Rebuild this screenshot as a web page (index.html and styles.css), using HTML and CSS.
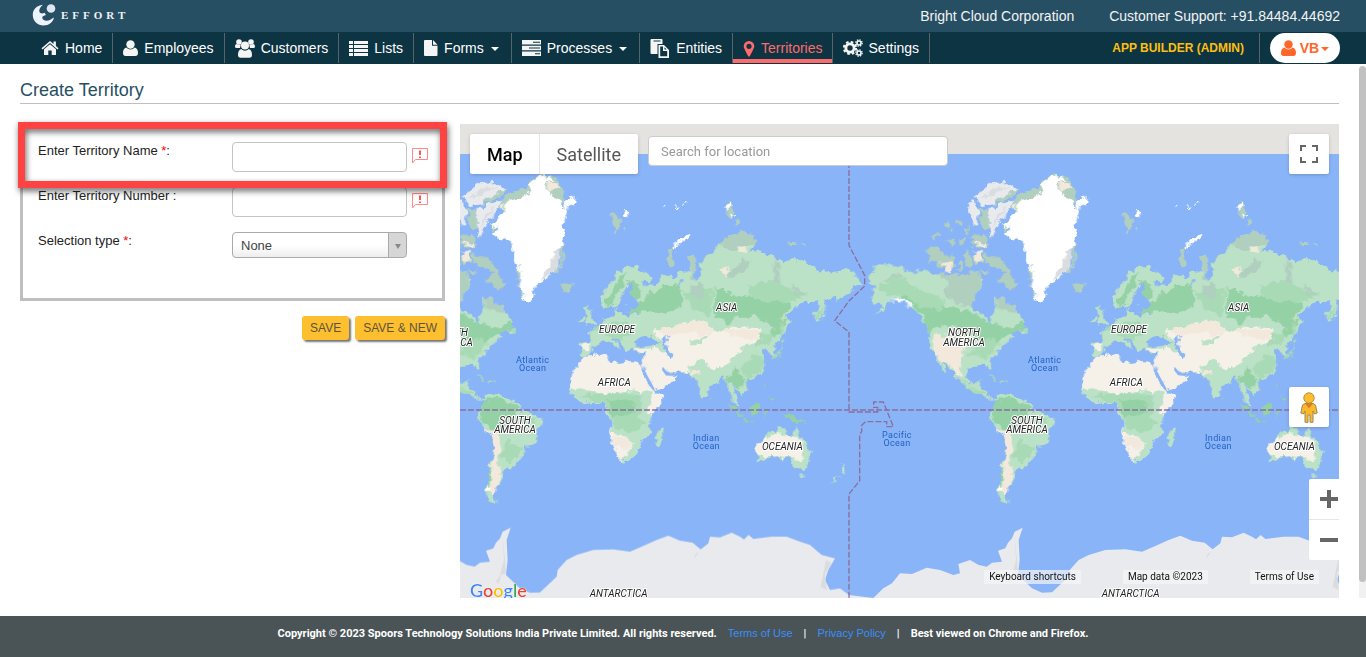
FILE: index.html
```html
<!DOCTYPE html>
<html lang="en">
<head>
<meta charset="utf-8">
<title>Create Territory</title>
<link rel="stylesheet" href="styles.css">
</head>
<body>
<header>
  <div class="topbar">
    <a class="brand" href="#" aria-label="Effort">
      <svg width="24" height="22" viewBox="0 0 24 22"><circle cx="19" cy="4.500" r="4.300" fill="#dde6f2"/><path d="M11 .8C4 1.500.8 6 .8 11c0 6 4.700 10.500 10.700 10.500 5.500 0 9.500-3.500 10.500-8-2.500 1.500-5 3.500-8 3.300-2.500-.3-4-1.800-3.700-3.500.3-1 1.500-1.700 3.700-2.300l-1.500-2.200C10.500 9.700 8.500 9.800 7.500 8 6.700 6 8 3 11 .8Z" fill="#edf3fc"/></svg>
      <span>EFFORT</span>
    </a>
    <span class="company">Bright Cloud Corporation</span>
    <span>Customer Support: +91.84484.44692</span>
  </div>
  <nav class="nav">
    <a href="#"><svg width="18" height="16" viewBox="0 0 17 16"><path d="M8.500 1 0 8.200l1 1.200 7.500-6.300L16 9.400l1-1.200-2.600-2.200V1.500H12v2.500Z"/><path d="m8.500 4.200-6 5V15h4.300v-4.500h3.400V15h4.300V9.200Z"/></svg>Home</a>
    <a href="#"><svg width="15" height="16" viewBox="0 0 15 16"><circle cx="7.500" cy="4.500" r="4.200"/><path d="M3.300 7.600C1 8.300 0 10.500 0 13c0 2 1 3 2.500 3h10c1.500 0 2.500-1 2.500-3 0-2.500-1-4.700-3.300-5.400-2.300 2.500-6.100 2.500-8.400 0Z"/></svg>Employees</a>
    <a href="#"><svg width="20" height="19" viewBox="0 0 20 19"><circle cx="4" cy="3" r="2.800"/><circle cx="16" cy="3" r="2.800"/><path d="M0 7.500C0 6 .7 5.200 1.800 5c1.400 1 3 1 4 .4L5 9H1.500Q0 9 0 7.500ZM20 7.500C20 6 19.300 5.200 18.200 5c-1.400 1-3 1-4 .4L15 9h3.500Q20 9 20 7.500Z"/><circle cx="10" cy="6.500" r="4"/><path d="M6.300 10C4 10.500 3 12.500 3 16c0 2 1 2.700 2.500 2.700h9c1.500 0 2.500-.7 2.500-2.700 0-3.500-1-5.500-3.300-6-2.200 2.200-5.200 2.200-7.400 0Z"/></svg>Customers</a>
    <a href="#"><svg width="19" height="15" viewBox="0 0 19 15"><path d="M0 0h4v3H0ZM5 0h14v3H5ZM0 4h4v3H0ZM5 4h14v3H5ZM0 8h4v3H0ZM5 8h14v3H5ZM0 12h4v3H0ZM5 12h14v3H5Z"/></svg>Lists</a>
    <a href="#"><svg width="14" height="16" viewBox="0 0 14 16"><path d="M1 0h7v5.800h5.500V15q0 1-1 1H1q-1 0-1-1V1q0-1 1-1ZM9 0l4.500 4.800H9Z"/></svg>Forms<i class="caret"></i></a>
    <a href="#"><svg width="19" height="16" viewBox="0 0 19 16"><path fill-rule="evenodd" d="M0 0h19v4.500H0ZM11 1.700v1h7v-1ZM0 5.700h19v4.500H0ZM7 7.500v1h11v-1ZM0 11.400h19V16H0ZM13 13.200v1h5v-1Z"/></svg>Processes<i class="caret"></i></a>
    <a href="#"><svg width="20" height="19" viewBox="0 0 19 19"><path fill-rule="evenodd" d="M1 0h10q1 0 1 1v4H7v10H1q-1 0-1-1V1q0-1 1-1Zm2 1.500v1h7v-1Z"/><path fill-rule="evenodd" d="M8 6h5.500l5 5v8H8Zm1.700 1.500v9.800h7V12H12.500V7.500Zm4.300.8V10.500h2.200Z"/></svg>Entities</a>
    <a class="current" href="#"><svg width="12" height="17" viewBox="0 0 12 17"><path fill-rule="evenodd" d="M6 1a5.300 5.300 0 0 1 5.300 5.300c0 2-3.300 7.400-4.300 9.700q-1 1.200-2 0C4 13.700.7 8.300.7 6.300A5.300 5.300 0 0 1 6 1Zm0 2.700a2.600 2.600 0 1 0 0 5.200 2.600 2.600 0 0 0 0-5.200Z"/></svg>Territories</a>
    <a href="#"><svg class="gears" width="20" height="18" viewBox="0 0 20 18"><circle cx="7" cy="9" r="4.100" stroke-width="2.800"/><circle cx="7" cy="9" r="6.100" stroke-width="2" stroke-dasharray="2.600 2.190"/><circle cx="16" cy="4" r="2" stroke-width="1.600"/><circle cx="16" cy="4" r="3.200" stroke-width="1.300" stroke-dasharray="1.400 1.110"/><circle cx="16" cy="14" r="2" stroke-width="1.600"/><circle cx="16" cy="14" r="3.200" stroke-width="1.300" stroke-dasharray="1.400 1.110"/></svg>Settings</a>
    <a class="builder" href="#">APP BUILDER (ADMIN)</a>
    <button class="user" type="button"><svg width="15" height="16" viewBox="0 0 15 16"><circle cx="7.500" cy="4.500" r="4.200"/><path d="M3.300 7.600C1 8.300 0 10.500 0 13c0 2 1 3 2.500 3h10c1.500 0 2.500-1 2.500-3 0-2.500-1-4.700-3.300-5.400-2.300 2.500-6.100 2.500-8.400 0Z"/></svg>VB<i class="caret"></i></button>
  </nav>
</header>

<div class="viewport">
<main>
  <h1>Create Territory</h1>
  <div class="columns">
    <form class="territory">
      <div class="panel">
        <div class="field">
          <label for="name">Enter Territory Name <b>*</b>:</label>
          <input id="name" type="text">
          <svg class="hint" width="18" height="17" viewBox="0 0 18 17"><path d="M1.500 1.500h15v11h-12l-3 3.500Z"/><path class="mark" d="M9 3.500v4.500M9 9.500v1.500"/></svg>
        </div>
        <div class="field">
          <label for="number">Enter Territory Number :</label>
          <input id="number" type="text">
          <svg class="hint" width="18" height="17" viewBox="0 0 18 17"><path d="M1.500 1.500h15v11h-12l-3 3.500Z"/><path class="mark" d="M9 3.500v4.500M9 9.500v1.500"/></svg>
        </div>
        <div class="field">
          <label for="type">Selection type <b>*</b>:</label>
          <div class="picker"><select id="type"><option>None</option></select></div>
        </div>
        <div class="highlight"></div>
      </div>
      <div class="actions">
        <button type="button">SAVE</button>
        <button type="button">SAVE &amp; NEW</button>
      </div>
    </form>

    <section class="map" aria-label="Map">
      <svg class="world" viewBox="0 12 2637 1422" preserveAspectRatio="xMinYMin slice">
        <defs>
          <filter id="coast" x="-400" y="100" width="1720" height="1100" filterUnits="userSpaceOnUse">
            <feTurbulence type="fractalNoise" baseFrequency="0.045" numOctaves="3" seed="4" result="n"/>
            <feDisplacementMap in="SourceGraphic" in2="n" scale="28" xChannelSelector="R" yChannelSelector="G"/>
          </filter>
          <g id="earth">
            <g filter="url(#coast)">
              <!-- North America -->
              <g transform="translate(-696 0)">
                <path class="g1" d="M385 460 400 445 428 432 470 440 500 450 518 458 550 445 560 455 590 460 620 470 665 465 680 470 700 455 715 450 718 470 730 480 728 500 700 530 693 560 700 572 730 580 748 605 752 615 758 590 765 570 762 530 795 530 800 550 815 565 828 555 832 580 855 605 845 620 866 636 845 640 830 630 810 640 828 648 800 665 790 680 770 700 745 725 753 755 744 757 735 735 700 738 682 745 678 770 690 792 705 795 722 778 720 800 738 808 740 825 760 838 770 832 775 842 755 842 730 830 715 812 685 800 655 785 640 755 606 722 625 765 615 762 590 710 568 680 568 650 560 620 540 590 520 565 500 550 470 535 445 545 435 568 405 584 430 560 400 550 392 530 408 520 390 510 405 495 385 490 398 478Z"/>
                <path class="g3" d="M500 500 530 530 580 555 640 560 700 580 750 610 800 625 845 605 855 620 820 640 780 650 760 690 720 660 650 620 590 620 565 635 550 590 520 560 480 530Z"/>
                <path class="g2" d="M415 500 480 470 520 500 560 520 620 540 600 570 540 560 490 520 440 525ZM680 700 760 650 780 670 740 715ZM640 760 690 800 740 815 720 825 680 800Z"/>
                <path class="tu" d="M590 462 665 465 715 450 728 495 700 530 693 560 650 555 610 520 625 490ZM765 530 795 530 800 550 828 560 826 580 770 565ZM430 475 480 460 495 466 440 485Z"/>
                <path class="s2" d="M580 640 620 650 680 670 660 720 672 770 650 770 630 735 600 720 580 690Z"/>
                <path class="g2" d="M745 770 770 776 772 782 748 776ZM785 783 802 786 800 791 784 789ZM845 626 868 637 850 640Z"/>
                <path class="wh" d="M450 540 480 537 505 546 525 560 500 552 470 543Z"/>
                <path class="tu" d="M562 390 580 383 610 396 640 412 646 440 630 452 600 440 590 425 567 425ZM655 425 668 428 665 455 655 450ZM672 405 690 395 697 425 690 445 680 440ZM700 395 720 392 730 425 712 435 700 420ZM730 400 775 410 800 440 820 470 830 495 812 515 790 490 770 480 800 460 770 445 735 430ZM690 345 715 340 745 345 740 365 705 370ZM690 370 735 368 752 375 735 382 705 382ZM715 450 745 450 740 465ZM620 365 645 360 640 378ZM660 355 678 352 675 370 662 372ZM573 350 595 335 600 347 580 356ZM612 308 628 306 622 325ZM648 292 668 300 666 315 650 308ZM670 390 680 388 676 400ZM630 325 642 318 638 335ZM672 330 685 315 682 345Z"/>
                <path class="s2" d="M598 425 640 425 632 455 612 458 618 440ZM702 394 726 394 722 428 708 424ZM705 372 735 366 740 378 710 380Z"/>
              </g>
              <!-- Arctic ice and Greenland -->
              <path class="ice" d="M8 232 30 210 60 190 105 186 135 210 125 225 90 240 60 250 30 256ZM50 270 90 250 125 238 115 260 95 285 75 320 70 335 60 353 50 330ZM-8 245 4 240 20 270 18 312 6 314-11 275Z"/>
              <path class="ice2" d="M25 238 70 205 115 200 60 228ZM60 330 75 280 105 260 72 310Z"/>
              <path class="tu" d="M60 255 100 225 138 208 128 225 85 248ZM20 265 45 268 52 300 48 330 30 318ZM195 210 215 180 250 162 288 172 303 205 318 245 300 260 160 250 130 275 115 262 135 225 165 212ZM90 318 104 300 108 335ZM168 425 182 460 180 520 190 540 180 500 172 460ZM275 460 306 435 300 380 314 360 310 440 290 458Z"/>
              <path class="s2" d="M255 190 290 185 300 210 270 215ZM120 255 138 248 130 275Z"/>
              <path class="wh" d="M228 175 262 165 280 180 250 190 262 210 282 225 300 250 312 268 318 240 347 228 346 246 325 262 312 300 308 320 318 342 305 355 310 375 295 400 300 435 280 455 250 480 225 500 215 520 214 546 190 538 182 500 184 460 165 430 158 385 148 358 105 352 100 340 118 325 90 315 105 300 130 282 145 240 185 232 215 215 205 195Z"/>
              <path class="ice2" d="M278 400 300 380 298 440 265 465 240 480 270 440Z"/>
              <path class="tu" d="M300 492 335 490 338 502 318 515 305 510ZM448 285 468 280 475 300 488 298 478 310 470 343 460 325 455 305ZM490 320 502 322 498 328ZM800 245 812 250 822 285 812 300 800 285ZM826 300 835 292 846 305 828 318ZM985 360 1012 360 1016 375 985 374ZM1020 370 1040 372 1030 378Z"/>
              <path class="wh" d="M485 285 495 270 513 272 500 290ZM800 255 810 248 815 262 800 270ZM810 280 822 285 818 296ZM603 262 616 256 614 262ZM640 255 650 262 660 258 658 266 648 266ZM668 252 678 248 674 256Z"/>
              <path class="tu" d="M620 425 626 400 640 380 650 370 640 400 640 435 630 435Z"/>
              <path class="wh" d="M640 380 650 362 688 342 690 350 668 362 648 382Z"/>
              <!-- Eurasia -->
              <path class="g1" d="M425 560 423 525 445 500 465 465 500 440 530 438 560 460 575 478 570 490 545 483 560 500 580 490 600 480 610 462 640 475 660 460 690 455 688 415 708 408 705 450 712 485 730 450 720 430 740 405 765 400 770 370 800 365 840 330 882 345 883 370 870 395 900 398 920 400 940 410 970 430 1000 410 1040 430 1080 450 1130 455 1160 445 1190 470 1210 495 1190 500 1170 515 1130 540 1092 535 1095 560 1085 600 1070 613 1062 580 1085 550 1040 545 1010 555 980 585 990 605 965 650 940 680 950 708 937 707 922 685 905 690 915 720 910 755 880 775 855 780 864 810 845 828 828 805 822 790 824 825 838 865 822 850 808 815 800 785 790 775 770 775 745 800 738 830 728 832 712 785 695 775 685 758 640 757 615 750 652 770 640 785 600 805 583 810 570 780 550 745 552 715 555 695 525 700 515 682 500 700 488 672 460 650 480 690 450 665 425 665 405 675 395 700 375 710 360 700 362 668 395 665 385 640 410 620 430 600 460 590 465 565 478 578 500 590 540 580 500 565 490 530 465 565 445 560Z"/>
              <path class="g3" d="M570 520 620 495 660 490 670 545 650 570 600 580 545 570 510 590 500 570 540 550ZM480 470 500 455 490 500 450 550 440 540ZM765 500 830 530 960 520 990 560 960 600 985 590 960 640 930 660 940 620 890 590 830 590 800 610 760 580ZM430 540 460 530 465 555 440 560ZM795 780 830 740 850 780 840 810 815 790ZM505 480 540 495 545 530 515 545 495 515Z"/>
              <path class="g2" d="M400 620 500 600 520 640 480 660 420 640ZM860 500 930 480 990 510 1050 520 980 550 880 540ZM840 740 890 700 915 720 905 750 860 780ZM670 520 720 500 760 510 750 590 700 570ZM1068 570 1090 560 1080 600 1068 605ZM880 640 940 640 930 670 890 680Z"/>
              <path class="tu" d="M770 370 840 330 882 345 883 370 850 385 800 388ZM688 415 708 408 706 480 695 470ZM800 470 850 415 870 430 830 470ZM940 410 955 440 965 490 945 490ZM990 490 1030 520 1050 530 1010 525ZM690 500 720 490 735 530 700 535Z"/>
              <path class="s1" d="M580 635 640 620 700 605 745 605 760 640 820 620 900 625 905 655 880 670 850 680 830 700 790 745 740 745 710 725 690 740 690 757 640 757 612 745 652 770 640 785 600 805 583 810 550 745 552 715 555 695 520 695 530 682 600 690 620 700 610 665Z"/>
              <path class="s2" d="M580 630 700 605 740 605 760 640 740 650 690 635 620 645ZM780 450 800 440 812 455 795 468ZM835 385 865 375 855 400ZM690 757 705 750 720 745 715 765 700 775ZM780 630 900 630 895 660 840 650Z"/>
              <path class="g1" d="M700 740 725 720 760 745 800 745 790 775 745 800 738 830 728 832 712 785 695 775 722 755ZM690 665 740 652 735 662 690 675Z"/>
              <path class="g1" d="M356 605 365 585 375 590 370 610ZM376 565 388 560 385 580 400 600 403 615 380 620 378 600Z"/>
              <path class="s1" d="M362 675 390 670 395 690 380 698 370 690Z"/>
              <!-- seas -->
              <path class="sea" d="M500 495 520 490 510 520 525 545 540 555 500 580 488 565 500 555 482 535ZM525 665 535 648 555 655 575 648 600 668 585 678 555 675 532 680ZM605 655 625 645 620 665 628 690 640 705 628 712 615 695 610 675ZM655 480 665 475 660 500ZM700 460 708 455 710 480Z"/>
              <path class="g2" d="M965 598 968 630 964 660 958 630ZM958 665 972 660 970 672 960 678ZM940 710 955 700 965 680 965 700 950 715 935 718Z"/>
              <!-- Africa -->
              <path class="s1" d="M375 710 440 702 448 720 480 732 490 722 548 732 548 755 580 815 617 825 610 845 575 880 568 900 572 935 548 960 545 980 520 1015 480 1026 470 1000 462 975 450 950 455 900 440 880 438 855 400 845 365 848 330 820 328 785 340 750 362 725Z"/>
              <path class="g1" d="M330 810 370 812 430 820 480 815 545 820 555 805 580 825 570 850 560 880 575 890 572 935 548 960 545 980 520 1015 480 1026 520 975 500 950 455 940 455 900 440 880 438 855 400 845 365 848 330 820Z"/>
              <path class="g2" d="M360 825 450 820 540 825 550 850 530 890 560 910 520 940 460 920 450 870 430 850 380 840Z"/>
              <path class="g3" d="M445 840 510 835 530 860 500 890 455 885Z"/>
              <path class="s2" d="M455 945 500 955 520 970 495 990 465 975Z"/>
              <path class="g1" d="M586 950 600 930 612 925 608 950 600 980 588 975Z"/>
              <!-- South America -->
              <path class="g1" d="M72 830 95 820 135 828 150 840 180 855 190 875 215 882 248 895 248 910 230 935 228 960 215 972 195 978 190 1005 165 1035 155 1045 130 1050 122 1075 115 1100 100 1120 112 1150 100 1152 82 1135 78 1100 88 1060 95 1010 98 960 90 940 68 922 52 892 60 865 75 850Z"/>
              <path class="g3" d="M72 840 120 835 180 860 150 890 130 900 140 940 95 930 62 900 60 870ZM88 1050 95 1060 85 1105 80 1100Z"/>
              <path class="g2" d="M140 960 170 980 190 990 150 1025 120 1010ZM200 890 230 900 220 915Z"/>
              <path class="s2" d="M70 922 95 935 115 945 122 990 110 1010 122 1050 115 1090 105 1125 88 1115 95 1060 96 1000 98 960Z"/>
              <path class="wh" d="M82 1095 92 1100 88 1118 80 1110Z"/>
              <!-- Oceania -->
              <path class="g1" d="M885 970 915 955 930 935 965 922 980 922 977 940 1000 945 1005 918 1018 945 1030 965 1052 995 1048 1025 1035 1045 1005 1045 990 1020 960 1015 935 1010 905 1025 890 1022 892 1000Z"/>
              <path class="s1" d="M888 968 920 955 950 935 985 945 1010 948 1028 972 1030 995 1025 1030 990 1016 950 1008 895 1008 887 985Z"/>
              <path class="g1" d="M1018 1062 1030 1063 1026 1074ZM1144 1038 1158 1048 1148 1062ZM1140 1064 1128 1080 1112 1092 1122 1078Z"/>
              <path class="g3" d="M808 848 830 865 848 885 852 895 838 890 820 868ZM866 870 885 855 900 842 905 860 895 885 872 880ZM850 898 885 900 882 905 852 903ZM910 870 925 868 915 895ZM965 880 990 882 1020 895 1040 908 1010 905 975 895ZM912 790 920 790 918 808ZM925 830 938 835 935 845ZM745 830 750 838 745 842Z"/>
            </g>
            <path class="sea" d="M545 745 553 750 583 805 580 812 565 792ZM608 740 618 752 635 762 645 758 640 768 618 766 606 750Z"/>
            <!-- Antarctica -->
            <path class="ice" d="M-369 1425-296 1434-266 1405-240 1390-216 1360-180 1362-136 1343-96 1350-56 1365-36 1360-41 1332-6 1320 20 1335 44 1340 60 1328 90 1325 78 1292 100 1285 108 1268 120 1255 128 1235 152 1223 140 1260 143 1320 138 1365 180 1405 210 1418 240 1417 290 1370 293 1350 320 1320 350 1305 400 1290 460 1288 510 1295 550 1278 590 1260 625 1247 660 1262 698 1268 722 1288 745 1270 750 1250 780 1252 815 1238 840 1250 852 1258 866 1245 880 1257 935 1250 980 1250 1020 1265 1050 1275 1085 1305 1125 1315 1105 1350 1095 1380 1110 1410 1140 1405 1167 1425V1500H-369Z"/>
            <path class="ice2" d="M128 1255 132 1320 120 1365 138 1360 136 1330ZM108 1385 125 1360 116 1390ZM1098 1320 1115 1330 1095 1360 1100 1410 1082 1400ZM700 1320 708 1300 716 1296Z"/>
          </g>
        </defs>
        <rect y="42" width="6000" height="1500" class="sea"/>
        <use href="#earth"/><use href="#earth" x="1536"/><use href="#earth" x="3072"/>
        <path class="void" d="M0 12H6000V102H0Z"/>
        <g class="lines"><path d="M0 870H6000"/><path d="M1167 102V376L1214 466V498L1166 544 1124 602 1167 636V876H1253V862H1241V846H1270L1300 920H1280V905H1217L1205 916V935L1199 944V1082L1167 1122V1440"/></g>
        <g class="place">
          <text x="800" y="574">ASIA</text><text x="2336" y="574">ASIA</text>
          <text x="471" y="640">EUROPE</text><text x="2007" y="640">EUROPE</text>
          <text x="463" y="797">AFRICA</text><text x="1999" y="797">AFRICA</text>
          <text x="-24" y="648">NORTH</text><text x="-24" y="678">AMERICA</text><text x="1512" y="649">NORTH</text><text x="1512" y="679">AMERICA</text>
          <text x="165" y="912">SOUTH</text><text x="165" y="940">AMERICA</text><text x="1701" y="912">SOUTH</text><text x="1701" y="940">AMERICA</text>
          <text x="967" y="991">OCEANIA</text><text x="2503" y="991">OCEANIA</text>
          <text x="476" y="1432">ANTARCTICA</text><text x="2012" y="1432">ANTARCTICA</text>
        </g>
        <g class="ocean">
          <text x="218" y="730">Atlantic</text><text x="218" y="754">Ocean</text><text x="1754" y="730">Atlantic</text><text x="1754" y="754">Ocean</text>
          <text x="739" y="964">Indian</text><text x="739" y="988">Ocean</text><text x="2275" y="964">Indian</text><text x="2275" y="988">Ocean</text>
          <text x="1311" y="955">Pacific</text><text x="1311" y="979">Ocean</text>
        </g>
      </svg>
      <div class="maptools">
        <div class="maptype"><button class="on" type="button">Map</button><button type="button">Satellite</button></div>
        <input class="search" type="text" placeholder="Search for location" aria-label="Search for location">
      </div>
      <button class="tile full" type="button" aria-label="Fullscreen"><svg width="18" height="18" viewBox="0 0 18 18"><path d="M1 6V1h5M12 1h5v5M17 12v5h-5M6 17H1v-5" fill="none" stroke="#666" stroke-width="2"/></svg></button>
      <button class="tile pegman" type="button" aria-label="Street View"><svg width="18" height="31" viewBox="0 0 18 31"><path d="M5 11.500 2.500 13 .8 21l2.700 1 1.500-3v11.300h3V23h2v7.300h3V19l1.500 3 2.700-1-1.700-8-2.500-1.500Z" fill="#fbb829" stroke="#9a8a5c"/><path d="m5 11.500 4 5 4-5Z" fill="#e07b2c"/><circle cx="9" cy="6" r="5.200" fill="#fdbd2d" stroke="#b5903c"/></svg></button>
      <div class="zoom">
        <button type="button" aria-label="Zoom in"><svg width="18" height="18"><path d="M9 0v18M0 9h18" stroke="#666" stroke-width="4"/></svg></button>
        <button type="button" aria-label="Zoom out"><svg width="18" height="18"><path d="M0 9h18" stroke="#666" stroke-width="4"/></svg></button>
      </div>
      <div class="google" aria-label="Google"><span class="b">G</span><span class="r">o</span><span class="y">o</span><span class="b">g</span><span class="gr">l</span><span class="r">e</span></div>
      <div class="credits"><button type="button">Keyboard shortcuts</button><span>Map data ©2023</span><a href="#">Terms of Use</a></div>
    </section>
  </div>
</main>
<div class="scroll"><div class="thumb"></div></div>
</div>

<footer>
  <span>Copyright © 2023 Spoors Technology Solutions India Private Limited. All rights reserved.</span>
  <a href="#">Terms of Use</a><span>|</span><a href="#">Privacy Policy</a><span>|</span>
  <span>Best viewed on Chrome and Firefox.</span>
</footer>
</body>
</html>
```
FILE: styles.css
```css
* { box-sizing: border-box; }
body {
  margin: 0;
  min-height: 100vh;
  display: flex;
  flex-direction: column;
  background: #fff;
  font: 14px "Liberation Sans", Arial, sans-serif;
  color: #222;
}
a { text-decoration: none; color: inherit; }
button { border: 0; padding: 0; background: none; font: inherit; color: inherit; }
svg { display: block; flex: none; }

/* header */
.topbar {
  height: 32px;
  display: flex;
  align-items: center;
  gap: 35px;
  padding: 0 26px 0 32px;
  background: #264f64;
  color: #f3f3f3;
}
.brand { display: flex; align-items: center; gap: 5px; margin-right: auto; padding-bottom: 2px; }
.brand span { font: bold 11px "Liberation Serif", serif; letter-spacing: 4px; }
.nav {
  min-height: 32px;
  display: flex;
  align-items: center;
  padding: 0 26px 0 31px;
  background: #0d3443;
  color: #fff;
}
.nav a {
  height: 30px;
  display: flex;
  align-items: center;
  gap: 6px;
  padding: 0 10px;
  border-right: 1px solid #5a6468;
  fill: #f5f5f5;
}
.nav .current { color: #ff6b6b; fill: #ff6b6b; box-shadow: inset 0 -4px #ff6b6b; padding-right: 9px; }
.gears { fill: none; stroke: #f5f5f5; }
.caret {
  border: 4px solid transparent;
  border-top-color: currentColor;
  border-bottom: 0;
  margin: 1px 2px 0 1px;
}
.nav .builder { margin-left: auto; padding-right: 15px; font: bold 12px "Liberation Sans", Arial, sans-serif; color: #fdbf0f; }
.user {
  height: 30px;
  width: 70px;
  margin-left: 10px;
  display: flex;
  align-items: center;
  justify-content: center;
  gap: 4px;
  border-radius: 15px;
  background: #fff;
  color: #ff6629;
  fill: #ff6629;
  font-weight: bold;
}
.user .caret { margin: 1px 0 0 -2px; }

/* page */
.viewport { flex: 1; display: flex; margin-bottom: 18px; }
main { flex: 1; display: flex; flex-direction: column; min-width: 0; padding: 12px 20px 0 20px; }
h1 {
  margin: 0 0 20px;
  padding: 3px 0 2px;
  border-bottom: 1px solid #bfbfbf;
  font-size: 18px;
  line-height: 22px;
  font-weight: normal;
  color: #264f64;
}
.columns { flex: 1; display: flex; gap: 15px; }
.scroll { width: 7px; padding-top: 2px; background: linear-gradient(#fff 50%, #f1f1f1 50%); }
.thumb { height: 97%; border-radius: 4px; background: #c1c1c1; }

.territory { width: 425px; flex: none; font-size: 13px; }
.panel {
  position: relative;
  display: flex;
  flex-direction: column;
  gap: 15px;
  padding: 15px 15px 40px;
  border: 3px solid #bfbfbf;
}
.field { display: grid; grid-template-columns: 194px 175px 18px; align-items: start; }
.field label { line-height: 17px; }
.field b { color: #f00; font-weight: normal; }
.field input { height: 30px; width: 100%; border: 1px solid #c4c4c4; border-radius: 4px; background: #fff; }
.hint { margin: 5px 0 0 4px; fill: none; stroke: #f88; }
.hint .mark { stroke: #f55; stroke-width: 2; }
.picker { position: relative; }
.picker select {
  appearance: none;
  width: 100%;
  height: 26px;
  padding: 0 8px;
  border: 1px solid #aaa;
  border-radius: 4px;
  background: linear-gradient(90deg, transparent 155px, #aaa 155px, #aaa 156px, #d6d6d6 156px), linear-gradient(#fff 50%, #eee);
  font: inherit;
  color: #444;
}
.picker::after {
  content: "";
  position: absolute;
  right: 6px;
  top: 12px;
  border: 3px solid transparent;
  border-top: 5px solid #888;
  border-bottom: 0;
}
.highlight {
  position: absolute;
  inset: -5px -5px auto;
  height: 66px;
  border: 7px solid #ff4343;
  filter: drop-shadow(1px 3px 3px rgba(0, 0, 0, .6));
  pointer-events: none;
}
.actions { display: flex; justify-content: flex-end; gap: 6px; padding-top: 15px; }
.actions button {
  height: 24px;
  padding: 0 8px;
  border-radius: 3px;
  background: #fdbf2d;
  box-shadow: 2px 2px 2px #777;
  font-size: 12px;
  color: #5c5340;
}

/* map */
.map { position: relative; flex: 1; min-width: 0; min-height: 474px; overflow: hidden; font-family: Roboto, sans-serif; }
.world { position: absolute; width: 100%; height: 100%; }
.void { fill: #e5e3df; }
.sea { fill: #8ab4f8; }
.g1 { fill: #bbe2c6; }
.g2 { fill: #a8dab5; }
.g3 { fill: #94d2a5; }
.tu { fill: #b1cfbf; }
.s1 { fill: #f5f0e8; }
.s2 { fill: #f2e9dc; }
.ice { fill: #e8eaed; }
.ice2 { fill: #dadce0; }
.wh { fill: #fff; }
.lines { fill: none; stroke: #8a6f9e; stroke-width: 4px; stroke-dasharray: 18px 6px; }
.place, .ocean { font-family: Roboto, sans-serif; text-anchor: middle; }
.place { font-size: 30px; font-style: italic; fill: #222; stroke: #fff; stroke-width: 6px; stroke-linejoin: round; paint-order: stroke; }
.ocean { font-size: 27px; fill: #2462c4; letter-spacing: 1px; }
.maptools { position: absolute; top: 10px; left: 10px; display: flex; gap: 10px; }
.maptype { display: flex; height: 40px; border-radius: 2px; background: #fff; box-shadow: 0 1px 4px -1px rgba(0, 0, 0, .3); font-size: 18px; color: #565656; }
.maptype button { padding: 0 17px; }
.maptype .on { padding-right: 16px; border-right: 1px solid #e6e6e6; font-weight: 500; color: #000; }
.search { width: 300px; height: 30px; margin-top: 2px; padding: 0 12px; border: 1px solid #ccc; border-radius: 4px; font: 13px Roboto, sans-serif; }
.search::placeholder { color: #999; }
.tile { position: absolute; right: 10px; width: 40px; height: 40px; display: grid; place-items: center; border-radius: 2px; background: #fff; box-shadow: 0 1px 4px -1px rgba(0, 0, 0, .3); }
.full { top: 10px; }
.pegman { bottom: 171px; }
.zoom { position: absolute; right: -10px; bottom: 38px; width: 40px; border-radius: 2px; background: #fff; }
.zoom button { width: 100%; height: 40px; display: grid; place-items: center; }
.zoom button + button { height: 41px; border-top: 1px solid #e6e6e6; }
.google { position: absolute; left: 10px; bottom: -3px; font: 500 18px/22px Lato, sans-serif; text-shadow: 0 0 1px #fff, 0 0 1px #fff; }
.google .b { color: #4285f4; }
.google .r { color: #ea4335; }
.google .y { color: #fbbc04; }
.google .gr { color: #34a853; }
.credits { position: absolute; right: 20px; bottom: 14px; display: flex; gap: 42px; font-size: 10px; line-height: 14px; color: #111; }
.credits > * { padding: 0 5px; background: rgba(245, 245, 245, .7); }

footer {
  min-height: 41px;
  display: flex;
  justify-content: center;
  align-items: center;
  gap: 11px;
  padding-bottom: 7px;
  background: #4a5456;
  font: bold 11px Roboto, sans-serif;
  color: #fff;
}
footer a { color: #3b8efc; font: 11px "Liberation Sans", Arial, sans-serif; }
```
